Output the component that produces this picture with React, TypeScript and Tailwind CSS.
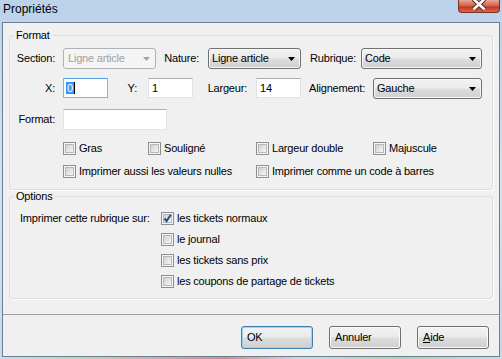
import React from "react";

const ui = "font-['Liberation_Sans',Arial,sans-serif]";
const btnBg =
  "bg-[linear-gradient(#f2f2f2_0%,#ebebeb_48%,#dddddd_52%,#cfcfcf_100%)]";

function Arrow({ disabled }: { disabled?: boolean }) {
  return (
    <svg width="7" height="4" viewBox="0 0 7 4" className="ml-auto mr-[5px] shrink-0">
      <polygon points="0,0 7,0 3.5,4" fill={disabled ? "#a3a3a3" : "#000"} />
    </svg>
  );
}

function Combo({
  value,
  className,
  disabled,
}: {
  value: string;
  className: string;
  disabled?: boolean;
}) {
  return (
    <div
      className={`flex h-[21px] items-center rounded-[3px] border ${className} ${
        disabled
          ? "border-[#adb2b5] bg-[#f4f4f4] pl-[4px] text-[#a0a0a0]"
          : `border-[#707070] ${btnBg} pl-[3px] text-black shadow-[inset_0_0_0_1px_#f8f8f8]`
      }`}
    >
      <span className="leading-[13px]">{value}</span>
      <Arrow disabled={disabled} />
    </div>
  );
}

function TextBox({
  className,
  children,
  focused,
}: {
  className: string;
  children?: React.ReactNode;
  focused?: boolean;
}) {
  return (
    <div
      className={`flex h-[20px] items-center border bg-white ${className} ${
        focused
          ? "border-[#7eb4ea] border-t-[#569de5] pl-[2px]"
          : "border-[#e2e3ea] border-t-[#abadb3] pl-[3px]"
      }`}
    >
      {children}
    </div>
  );
}

function Check({ label, checked }: { label: string; checked?: boolean }) {
  return (
    <div className="flex h-[13px] items-center gap-[3px]">
      <span className="relative flex h-[13px] w-[13px] shrink-0 items-center justify-center border border-[#8e8f8f] bg-[#f5f5f5]">
        <span className="h-[9px] w-[9px] border border-[#b6b8ba] bg-[linear-gradient(135deg,#cfd0d1,#f7f7f7)]" />
        {checked && (
          <svg width="11" height="11" viewBox="0 0 11 11" className="absolute left-[0px] top-[0px]">
            <path d="M2.5 5.5 L4.6 8 L8.8 1.8" fill="none" stroke="#2c4a86" strokeWidth="2" />
          </svg>
        )}
      </span>
      <span className="whitespace-nowrap leading-[13px]">{label}</span>
    </div>
  );
}

function Button({ label, def }: { label: React.ReactNode; def?: boolean }) {
  return (
    <div
      className={`flex h-[23px] w-[72px] items-center rounded-[3px] border pl-[5px] ${btnBg} ${
        def
          ? "border-[#3c7fb1] shadow-[inset_0_0_0_1px_#97d6f4]"
          : "border-[#707070] shadow-[inset_0_0_0_1px_#fbfbfb]"
      }`}
    >
      <span className="leading-[13px]">{label}</span>
    </div>
  );
}

export default function App() {
  return (
    <div
      className={`${ui} relative h-[359px] w-[502px] overflow-hidden bg-[linear-gradient(180deg,#bcd2ea_0%,#d3e3f2_50%,#c6d9ed_100%)] text-[11px] tracking-[-0.2px] text-black`}
    >
      {/* Title bar */}
      <div className="flex h-[22px] items-start">
        <span className="ml-[3px] mt-[1px] text-[12px] leading-[16px] tracking-normal">
          Propriétés
        </span>
        <div className="relative ml-auto mr-[2px] h-[13px] w-[42px] rounded-b-[4px] border border-t-0 border-[#7b3024] bg-[linear-gradient(#e8a595,#d4664f_45%,#c23a1f_60%,#d9684b)]">
          <svg width="42" height="13" viewBox="0 0 42 13" className="absolute left-[-1px] top-0">
            <path d="M15.5 -1 L26.5 9.5 M26.5 -1 L15.5 9.5" stroke="#5a2a22" strokeWidth="4.5" />
            <path d="M15.5 -1 L26.5 9.5 M26.5 -1 L15.5 9.5" stroke="#fff" strokeWidth="2.6" />
          </svg>
        </div>
      </div>

      {/* Client area */}
      <div className="mx-[2px] flex h-[335px] flex-col border border-[#6e7f92] bg-[#f0f0f0]">
        {/* Format */}
        <fieldset className="mx-[6px] mt-[6px] rounded-[3px] border border-[#d5dfe5] pb-[11px] shadow-[1px_1px_0_#ffffff]">
          <legend className="ml-[4px] px-[2px] leading-[13px]">Format</legend>

          <div className="mt-[6px] flex h-[21px] items-center">
            <span className="w-[45px] text-right">Section:</span>
            <Combo value="Ligne article" className="ml-[8px] w-[93px]" disabled />
            <span className="w-[43px] text-right">Nature:</span>
            <Combo value="Ligne article" className="ml-[9px] w-[93px]" />
            <span className="w-[55px] text-right">Rubrique:</span>
            <Combo value="Code" className="ml-[5px] w-[121px]" />
          </div>

          <div className="mt-[9px] flex items-start">
            <span className="w-[45px] text-right leading-[21px]">X:</span>
            <TextBox className="ml-[8px] w-[45px]" focused>
              <span className="flex h-[12px] items-center bg-[#3399ff] px-[1px] text-white">0</span>
              <span className="h-[12px] w-[1px] bg-black" />
            </TextBox>
            <span className="w-[29px] text-right leading-[21px]">Y:</span>
            <TextBox className="ml-[11px] w-[45px]">1</TextBox>
            <span className="w-[54px] text-right leading-[21px]">Largeur:</span>
            <TextBox className="ml-[9px] w-[45px]">14</TextBox>
            <span className="w-[64px] text-right leading-[21px]">Alignement:</span>
            <Combo value="Gauche" className="ml-[8px] w-[109px]" />
          </div>

          <div className="mt-[10px] flex items-start">
            <span className="w-[45px] text-right leading-[21px]">Format:</span>
            <TextBox className="ml-[8px] h-[21px] w-[104px]" />
          </div>

          <div className="mt-[12px] flex pl-[53px]">
            <div className="w-[85px]">
              <Check label="Gras" />
            </div>
            <div className="w-[108px]">
              <Check label="Souligné" />
            </div>
            <div className="w-[117px]">
              <Check label="Largeur double" />
            </div>
            <Check label="Majuscule" />
          </div>

          <div className="mt-[10px] flex pl-[53px]">
            <div className="w-[193px]">
              <Check label="Imprimer aussi les valeurs nulles" />
            </div>
            <Check label="Imprimer comme un code à barres" />
          </div>
        </fieldset>

        {/* Options */}
        <fieldset className="mx-[6px] rounded-[3px] border border-[#d5dfe5] pb-[10px] shadow-[1px_1px_0_#ffffff]">
          <legend className="ml-[4px] px-[2px] leading-[13px]">Options</legend>
          <div className="mt-[9px] flex">
            <span className="w-[151px] pl-[10px] leading-[13px]">Imprimer cette rubrique sur:</span>
            <div className="flex flex-col gap-[8px]">
              <Check label="les tickets normaux" checked />
              <Check label="le journal" />
              <Check label="les tickets sans prix" />
              <Check label="les coupons de partage de tickets" />
            </div>
          </div>
        </fieldset>

        <div className="mt-[15px] h-[1px] bg-[#a0a0a0]" />

        <div className="mt-[11px] flex justify-end gap-[16px] pr-[10px]">
          <Button label="OK" def />
          <Button label="Annuler" />
          <Button
            label={
              <>
                <span className="underline">A</span>ide
              </>
            }
          />
        </div>
      </div>

      <div className="h-[2px] bg-[linear-gradient(90deg,#c8dbef_0%,#b9d7c4_15%,#d98a8a_45%,#c8dbef_60%,#a9d3b4_80%,#c8dbef_100%)]" />
    </div>
  );
}
